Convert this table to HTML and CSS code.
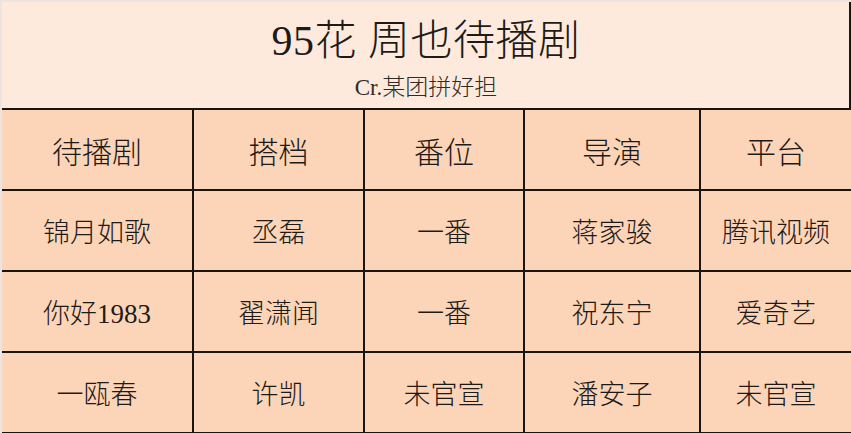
FILE: index.html
```html
<!DOCTYPE html>
<html lang="zh">
<head>
<meta charset="utf-8">
<title>95花 周也待播剧</title>
<link rel="stylesheet" href="styles.css">
</head>
<body>
<div class="sheet">
  <header class="head">
    <h1 class="title">95花 周也待播剧</h1>
    <p class="sub">Cr.某团拼好担</p>
  </header>
  <div class="grid">
    <div class="cell th first">待播剧</div>
    <div class="cell th">搭档</div>
    <div class="cell th">番位</div>
    <div class="cell th">导演</div>
    <div class="cell th">平台</div>

    <div class="cell first">锦月如歌</div>
    <div class="cell">丞磊</div>
    <div class="cell">一番</div>
    <div class="cell">蒋家骏</div>
    <div class="cell">腾讯视频</div>

    <div class="cell first">你好1983</div>
    <div class="cell">翟潇闻</div>
    <div class="cell">一番</div>
    <div class="cell">祝东宁</div>
    <div class="cell">爱奇艺</div>

    <div class="cell first">一瓯春</div>
    <div class="cell">许凯</div>
    <div class="cell">未官宣</div>
    <div class="cell">潘安子</div>
    <div class="cell">未官宣</div>
  </div>
</div>
</body>
</html>
```

FILE: styles.css
```css
* { box-sizing: border-box; }
html, body { margin: 0; padding: 0; background: #fce9dc; }
body {
  font-family: "Liberation Serif", "Noto Sans CJK SC", serif;
  font-weight: 300;
  color: #1e1a18;
}
.sheet {
  width: 851px;
  height: 433px;
  border-top: 2px solid #ece4de;
  border-left: 2px solid #ece4de;
  overflow: hidden;
}
.head {
  height: 106px;
  background: #fdeadd;
  border-right: 2px solid #1b1512;
  display: flex;
  flex-direction: column;
  align-items: center;
  padding-top: 14px;
  padding-left: 1px;
}
.title {
  margin: 0;
  font-size: 42px;
  line-height: 50px;
  font-weight: 300;
  letter-spacing: 0.5px;
}
.sub {
  margin: 8px 0 0;
  font-size: 23px;
  line-height: 28px;
  color: #302a26;
}
.grid {
  display: grid;
  grid-template-columns: 190px 171px 160px 176px 152px;
  grid-auto-rows: 81px;
  background: #fcd5b8;
  border-right: 2px solid #1b1512;
  border-bottom: 2px solid #1b1512;
  width: 849px;
}
.cell {
  border-top: 2px solid #1b1512;
  border-left: 2px solid #1b1512;
  display: flex;
  align-items: center;
  justify-content: center;
  font-size: 27px;
  padding-bottom: 1px;
  background: #fcd5b8;
}
.cell.first { border-left: none; }
.cell.th { font-size: 30px; padding-top: 1px; padding-bottom: 0; }
```
